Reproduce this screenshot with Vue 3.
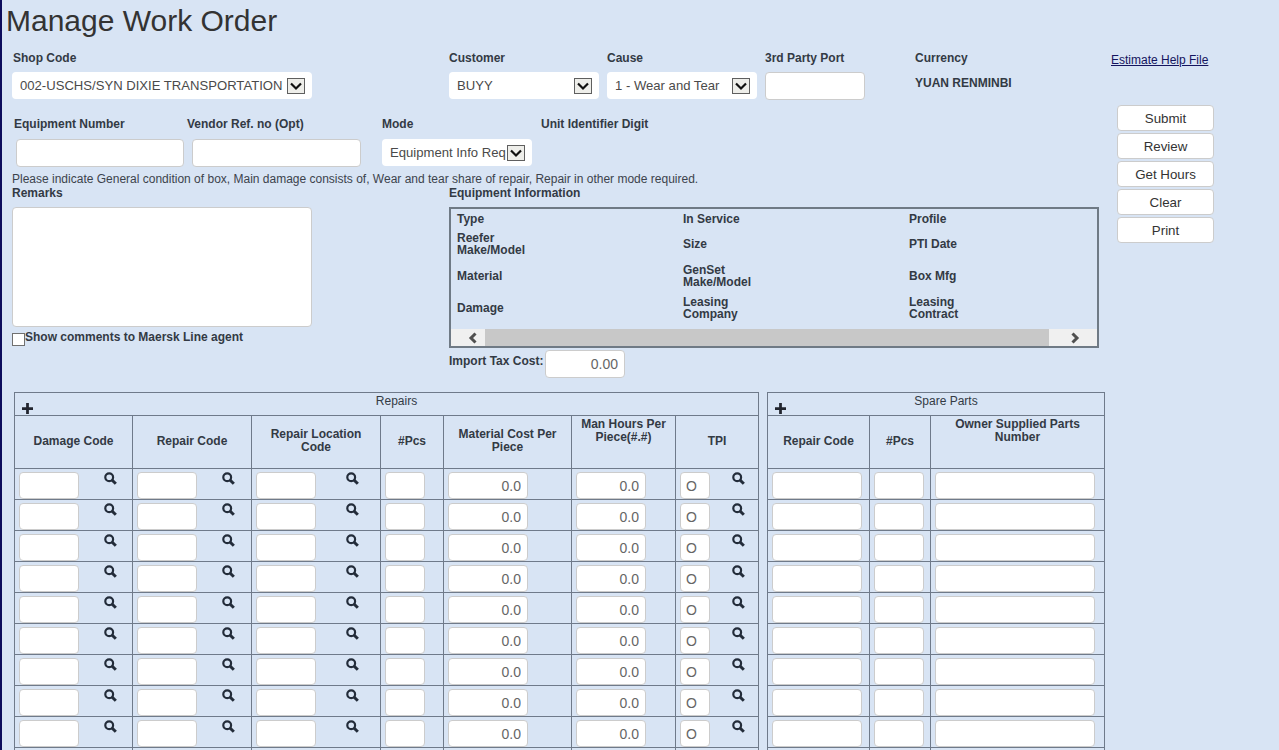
<template>
  <div class="page">
    <div class="top">
      <div class="main">
        <h1>Manage Work Order</h1>

        <div class="form-row first">
          <div class="field shop">
            <label>Shop Code</label>
            <div class="select w300">
              <select><option>002-USCHS/SYN DIXIE TRANSPORTATION</option></select>
              <svg class="arrow" width="18" height="16" viewBox="0 0 16 14"><path d="M3 4.500 8 9.500l5-5" /></svg>
            </div>
          </div>
          <div class="field customer">
            <label>Customer</label>
            <div class="select w150">
              <select><option>BUYY</option></select>
              <svg class="arrow" width="18" height="16" viewBox="0 0 16 14"><path d="M3 4.500 8 9.500l5-5" /></svg>
            </div>
          </div>
          <div class="field customer">
            <label>Cause</label>
            <div class="select w150">
              <select><option>1 - Wear and Tear</option></select>
              <svg class="arrow" width="18" height="16" viewBox="0 0 16 14"><path d="M3 4.500 8 9.500l5-5" /></svg>
            </div>
          </div>
          <div class="field third">
            <label>3rd Party Port</label>
            <input class="text w100" type="text">
          </div>
          <div class="field">
            <label>Currency</label>
            <div class="currency">YUAN RENMINBI</div>
          </div>
        </div>

        <div class="form-row second">
          <div class="field equip">
            <label>Equipment Number</label>
            <input class="text w168" type="text">
          </div>
          <div class="field vendor">
            <label>Vendor Ref. no (Opt)</label>
            <input class="text w169" type="text">
          </div>
          <div class="field mode">
            <label>Mode</label>
            <div class="select w150">
              <select><option>Equipment Info Req</option></select>
              <svg class="arrow" width="18" height="16" viewBox="0 0 16 14"><path d="M3 4.500 8 9.500l5-5" /></svg>
            </div>
          </div>
          <div class="field">
            <label>Unit Identifier Digit</label>
          </div>
        </div>

        <p class="hint">Please indicate General condition of box, Main damage consists of, Wear and tear share of repair, Repair in other mode required.</p>

        <div class="details">
          <div class="left">
            <label>Remarks</label>
            <textarea class="remarks"></textarea>
            <div class="check">
              <input type="checkbox">
              <span>Show comments to Maersk Line agent</span>
            </div>
          </div>
          <div class="right">
            <label>Equipment Information</label>
            <div class="info-box">
              <div class="info-grid">
                <div v-for="item in infoItems" :key="item" class="info-item">{{ item }}</div>
              </div>
              <div class="scrollbar">
                <div class="scroll-btn left-btn">
                  <svg width="12" height="12" viewBox="0 0 12 12"><path d="M8.500 1.500 4 6l4.500 4.500" /></svg>
                </div>
                <div class="scroll-thumb"></div>
                <div class="scroll-btn right-btn">
                  <svg width="12" height="12" viewBox="0 0 12 12"><path d="M3.500 1.500 8 6l-4.500 4.500" /></svg>
                </div>
              </div>
            </div>
            <div class="tax">
              <label>Import Tax Cost:</label>
              <input class="text num w80" type="text" value="0.00">
            </div>
          </div>
        </div>
      </div>

      <div class="side">
        <a class="help" href="#">Estimate Help File</a>
        <div class="buttons">
          <button v-for="b in buttons" :key="b" type="button">{{ b }}</button>
        </div>
      </div>
    </div>

    <div class="tables">
      <table class="grid repairs">
        <colgroup>
          <col v-for="w in repairCols" :key="w.id" :style="{ width: w.width + 'px' }">
        </colgroup>
        <thead>
          <tr class="title-row">
            <th colspan="7">
              <div class="title-inner">
                <svg class="plus" width="12" height="12" viewBox="0 0 12 12"><path d="M4.500 0h3v4.500H12v3H7.500V12h-3V7.500H0v-3h4.500z" /></svg>
                <span>Repairs</span>
              </div>
            </th>
          </tr>
          <tr class="head-row">
            <th>Damage Code</th>
            <th>Repair Code</th>
            <th>Repair Location Code</th>
            <th>#Pcs</th>
            <th>Material Cost Per Piece</th>
            <th class="hi">Man Hours Per Piece(#.#)</th>
            <th>TPI</th>
          </tr>
        </thead>
        <tbody>
          <tr v-for="n in 10" :key="n">
            <td>
              <div class="cell">
                <input class="text w60" type="text">
                <svg class="search s25" width="13" height="13" viewBox="0 0 13 13"><circle cx="5.200" cy="5.200" r="3.900" /><path d="M8 8l3.800 3.800" class="handle" /></svg>
              </div>
            </td>
            <td>
              <div class="cell">
                <input class="text w60" type="text">
                <svg class="search s25" width="13" height="13" viewBox="0 0 13 13"><circle cx="5.200" cy="5.200" r="3.900" /><path d="M8 8l3.800 3.800" class="handle" /></svg>
              </div>
            </td>
            <td>
              <div class="cell">
                <input class="text w60" type="text">
                <svg class="search s30" width="13" height="13" viewBox="0 0 13 13"><circle cx="5.200" cy="5.200" r="3.900" /><path d="M8 8l3.800 3.800" class="handle" /></svg>
              </div>
            </td>
            <td><div class="cell"><input class="text w40" type="text"></div></td>
            <td><div class="cell"><input class="text num w80" type="text" value="0.0"></div></td>
            <td><div class="cell"><input class="text num w70" type="text" value="0.0"></div></td>
            <td>
              <div class="cell">
                <input class="text tpi w30" type="text" value="O">
                <svg class="search s22" width="13" height="13" viewBox="0 0 13 13"><circle cx="5.200" cy="5.200" r="3.900" /><path d="M8 8l3.800 3.800" class="handle" /></svg>
              </div>
            </td>
          </tr>
        </tbody>
      </table>

      <table class="grid spares">
        <colgroup>
          <col v-for="w in spareCols" :key="w.id" :style="{ width: w.width + 'px' }">
        </colgroup>
        <thead>
          <tr class="title-row">
            <th colspan="3">
              <div class="title-inner">
                <svg class="plus" width="12" height="12" viewBox="0 0 12 12"><path d="M4.500 0h3v4.500H12v3H7.500V12h-3V7.500H0v-3h4.500z" /></svg>
                <span>Spare Parts</span>
              </div>
            </th>
          </tr>
          <tr class="head-row">
            <th>Repair Code</th>
            <th>#Pcs</th>
            <th class="hi">Owner Supplied Parts Number</th>
          </tr>
        </thead>
        <tbody>
          <tr v-for="n in 10" :key="n">
            <td><div class="cell"><input class="text w90" type="text"></div></td>
            <td><div class="cell"><input class="text w50" type="text"></div></td>
            <td><div class="cell"><input class="text w160" type="text"></div></td>
          </tr>
        </tbody>
      </table>
    </div>
  </div>
</template>

<script setup>
const buttons = ['Submit', 'Review', 'Get Hours', 'Clear', 'Print']

const infoItems = [
  'Type', 'In Service', 'Profile',
  'Reefer Make/Model', 'Size', 'PTI Date',
  'Material', 'GenSet Make/Model', 'Box Mfg',
  'Damage', 'Leasing Company', 'Leasing Contract'
]

const repairCols = [
  { id: 'damage', width: 118 },
  { id: 'repair', width: 119 },
  { id: 'location', width: 129 },
  { id: 'pcs', width: 63 },
  { id: 'material', width: 128 },
  { id: 'hours', width: 104 },
  { id: 'tpi', width: 83 }
]

const spareCols = [
  { id: 'repair', width: 102 },
  { id: 'pcs', width: 61 },
  { id: 'owner', width: 174 }
]
</script>

<style>
html, body {
  margin: 0;
  background: #d8e4f4;
}
</style>

<style scoped>
.page {
  box-sizing: border-box;
  height: 750px;
  overflow: hidden;
  border-left: 2px solid #0c0c5c;
  background: #d8e4f4;
  font-family: "Liberation Sans", Arial, sans-serif;
  font-size: 12px;
  color: #333a44;
}

.top {
  display: flex;
}

.main {
  width: 1087px;
  padding-left: 10px;
}

h1 {
  margin: 0 0 0 -6px;
  height: 50px;
  font-size: 30px;
  line-height: 42px;
  font-weight: normal;
  color: #333;
}

label {
  display: block;
  height: 14px;
  font-weight: bold;
  line-height: 16px;
}

.form-row {
  display: flex;
}

.first {
  height: 66px;
}

.first .field > label {
  margin-bottom: 8px;
}

.second {
  height: 55px;
}

.second .field > label {
  margin-bottom: 9px;
}

.shop { width: 437px; }
.shop > label { padding-left: 1px; }
.customer { width: 158px; }
.third { width: 150px; }
.equip { width: 173px; padding-left: 2px; }
.equip .text { margin-left: 2px; }
.vendor { width: 195px; }
.vendor .text { margin-left: 5px; }
.mode { width: 159px; }

.currency {
  margin-top: 12px;
  font-weight: bold;
  line-height: 14px;
}

.select {
  position: relative;
  box-sizing: border-box;
  height: 27px;
  background: #fff;
  border-radius: 4px;
}

.select select {
  appearance: none;
  width: 100%;
  height: 26px;
  padding: 0 0 0 8px;
  border: none;
  background: transparent;
  font-family: "Liberation Sans", Arial, sans-serif;
  font-size: 13.1px;
  color: #4a4a4a;
}

.arrow {
  position: absolute;
  top: 6px;
  right: 7px;
  box-sizing: border-box;
  background: #eeeeea;
  border: 1px solid #5f5f5f;
}

.arrow path {
  fill: none;
  stroke: #111;
  stroke-width: 2.200;
}

.text {
  box-sizing: border-box;
  display: block;
  height: 28px;
  padding: 0 6px;
  background: #fff;
  border: 1px solid #ccc;
  border-radius: 4px;
  font-family: "Liberation Sans", Arial, sans-serif;
  font-size: 14px;
  color: #666;
}

.num { text-align: right; }
.tpi { padding: 0 0 0 5px; }

.w30 { width: 30px; }
.w40 { width: 40px; }
.w50 { width: 50px; }
.w60 { width: 60px; }
.w70 { width: 70px; }
.w80 { width: 80px; }
.w90 { width: 90px; }
.w100 { width: 100px; }
.w150 { width: 150px; }
.w160 { width: 160px; }
.w168 { width: 168px; }
.w169 { width: 169px; }
.w300 { width: 300px; }

.hint {
  height: 14px;
  margin: 0;
  line-height: 16px;
  color: #3c434c;
}

.details {
  display: flex;
}

.left {
  width: 437px;
}

.left > label,
.right > label {
  height: 22px;
}

.remarks {
  display: block;
  box-sizing: border-box;
  width: 300px;
  height: 120px;
  resize: none;
  background: #fff;
  border: 1px solid #ccc;
  border-radius: 4px;
}

.check {
  display: flex;
  height: 20px;
  margin-top: 3px;
  font-weight: bold;
  line-height: 14px;
}

.check input {
  appearance: none;
  box-sizing: border-box;
  width: 13px;
  height: 13px;
  margin: 3px 0 0;
  background: #fff;
  border: 1px solid #707070;
}

.info-box {
  box-sizing: border-box;
  width: 650px;
  height: 141px;
  border: 2px solid #6f7a85;
}

.info-grid {
  display: grid;
  grid-template-columns: repeat(3, 226px);
  grid-template-rows: 18px repeat(3, 32px);
  height: 119px;
  padding: 1px 0 0 6px;
}

.info-item {
  align-self: center;
  width: 90px;
  font-weight: bold;
  line-height: 12px;
}

.scrollbar {
  display: flex;
  height: 17px;
  background: #f0f0f0;
}

.scroll-btn {
  display: flex;
  align-items: center;
  justify-content: center;
  box-sizing: border-box;
}

.left-btn { width: 34px; padding-left: 10px; }
.right-btn { width: 48px; padding-left: 4px; }

.scroll-btn path {
  fill: none;
  stroke: #505050;
  stroke-width: 3;
}

.scroll-thumb {
  flex: 1;
  background: #c8c8c8;
}

.tax {
  display: flex;
  align-items: flex-start;
  margin-top: 2px;
}

.tax label {
  width: 96px;
  margin-top: 3px;
}

.side {
  padding: 53px 0 0 12px;
}

.help {
  display: block;
  line-height: 14px;
  color: #14145e;
}

.buttons {
  display: flex;
  flex-direction: column;
  gap: 2px;
  width: 97px;
  margin: 38px 0 0 6px;
}

.buttons button {
  box-sizing: border-box;
  height: 26px;
  padding: 0;
  background: #fff;
  border: 1px solid #ccc;
  border-radius: 4px;
  font-family: "Liberation Sans", Arial, sans-serif;
  font-size: 13.33px;
  color: #333;
}

.tables {
  display: flex;
  align-items: flex-start;
  gap: 8px;
  margin: 14px 0 0 12px;
}

.grid {
  table-layout: fixed;
  border-collapse: collapse;
}

.grid th,
.grid td {
  padding: 0;
  border: 1px solid #6f7a8a;
}

.title-row th {
  height: 22px;
  vertical-align: top;
  font-weight: normal;
}

.title-inner {
  position: relative;
  padding-left: 20px;
  line-height: 16px;
  text-align: center;
}

.plus {
  position: absolute;
  left: 7px;
  top: 10px;
  width: 11px;
  height: 11px;
  fill: #22252e;
}

.head-row th {
  height: 50px;
  padding: 0 8px 2px;
  font-weight: bold;
  line-height: 13px;
  color: #333a44;
}

.head-row th.hi {
  vertical-align: top;
  padding-top: 2px;
  padding-bottom: 0;
}

.grid td {
  height: 30px;
}

.cell {
  display: flex;
  align-items: flex-start;
  height: 30px;
  padding: 3px 0 0 4px;
  box-sizing: border-box;
}

.cell .text {
  height: 27px;
  margin: 0;
}

.search {
  flex: none;
}

.s22 { margin-left: 22px; }
.s25 { margin-left: 25px; }
.s30 { margin-left: 30px; }

.search circle,
.search .handle {
  fill: none;
  stroke: #232c3a;
}

.search circle { stroke-width: 2.200; }
.search .handle { stroke-width: 3; }
</style>
